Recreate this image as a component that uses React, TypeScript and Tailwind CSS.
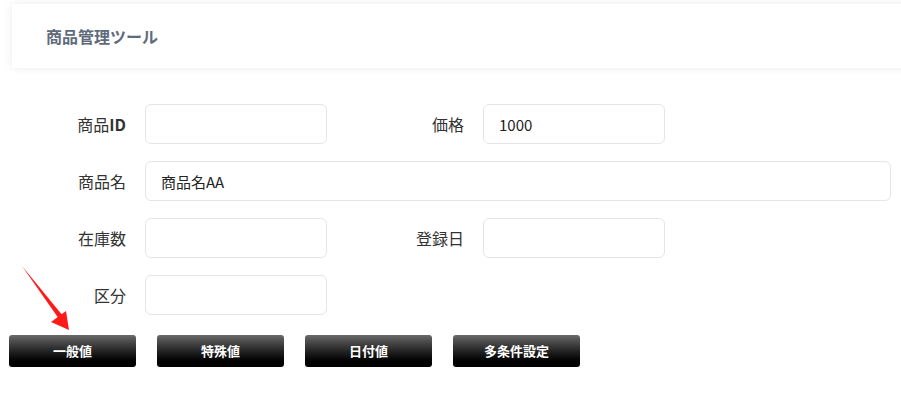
import React from "react";

const font = { fontFamily: '"Noto Sans CJK JP", "Noto Sans", sans-serif' };

function Field({ label, value = "", wide = false }: { label: string; value?: string; wide?: boolean }) {
  return (
    <input
      aria-label={label}
      defaultValue={value}
      className={`h-[40px] ${wide ? "w-[746px]" : "w-[182px]"} rounded-[6px] border border-[#e3e5e8] bg-white px-[15px] text-[15px] text-[#222] outline-none`}
    />
  );
}

function Label({ children, w }: { children: React.ReactNode; w: string }) {
  return <div className={`${w} pr-[19px] text-right text-[16px] text-[#333]`}>{children}</div>;
}

function ActionButton({ text }: { text: string }) {
  return (
    <button className="h-[32px] w-[127px] rounded-[3px] bg-gradient-to-b from-[#6a6a6a] to-[#000] text-[13px] font-bold text-white">
      {text}
    </button>
  );
}

export default function App() {
  return (
    <div className="relative h-[405px] w-[901px] overflow-hidden bg-white" style={font}>
      {/* Header */}
      <div className="pt-[4px]">
        <div className="ml-[12px] flex h-[64px] w-[920px] items-center rounded-[4px] bg-white pl-[34px] shadow-[0_0_8px_rgba(0,0,0,0.09)]">
          <h1 className="text-[16px] font-bold text-[#5f6b7b]">商品管理ツール</h1>
        </div>
      </div>

      {/* Form */}
      <div className="mt-[36px] flex flex-col gap-[17px]">
        <div className="flex items-center">
          <Label w="w-[145px]">
            商品<span className="font-semibold">ID</span>
          </Label>
          <Field label="商品ID" />
          <Label w="w-[156px]">価格</Label>
          <Field label="価格" value="1000" />
        </div>
        <div className="flex items-center">
          <Label w="w-[145px]">商品名</Label>
          <Field label="商品名" value="商品名AA" wide />
        </div>
        <div className="flex items-center">
          <Label w="w-[145px]">在庫数</Label>
          <Field label="在庫数" />
          <Label w="w-[156px]">登録日</Label>
          <Field label="登録日" />
        </div>
        <div className="flex items-center">
          <Label w="w-[145px]">区分</Label>
          <Field label="区分" />
        </div>
      </div>

      {/* Buttons */}
      <div className="mt-[20px] flex gap-[21px] pl-[9px]">
        <ActionButton text="一般値" />
        <ActionButton text="特殊値" />
        <ActionButton text="日付値" />
        <ActionButton text="多条件設定" />
      </div>

      {/* Annotation arrow */}
      <svg className="absolute left-0 top-0" width="100" height="340" viewBox="0 0 100 340">
        <path d="M22 266 L59 319 L63 316 Z" fill="#ff1a1a" />
        <path d="M69 330 L51 322 L66 311 Z" fill="#ff1a1a" />
      </svg>
    </div>
  );
}
